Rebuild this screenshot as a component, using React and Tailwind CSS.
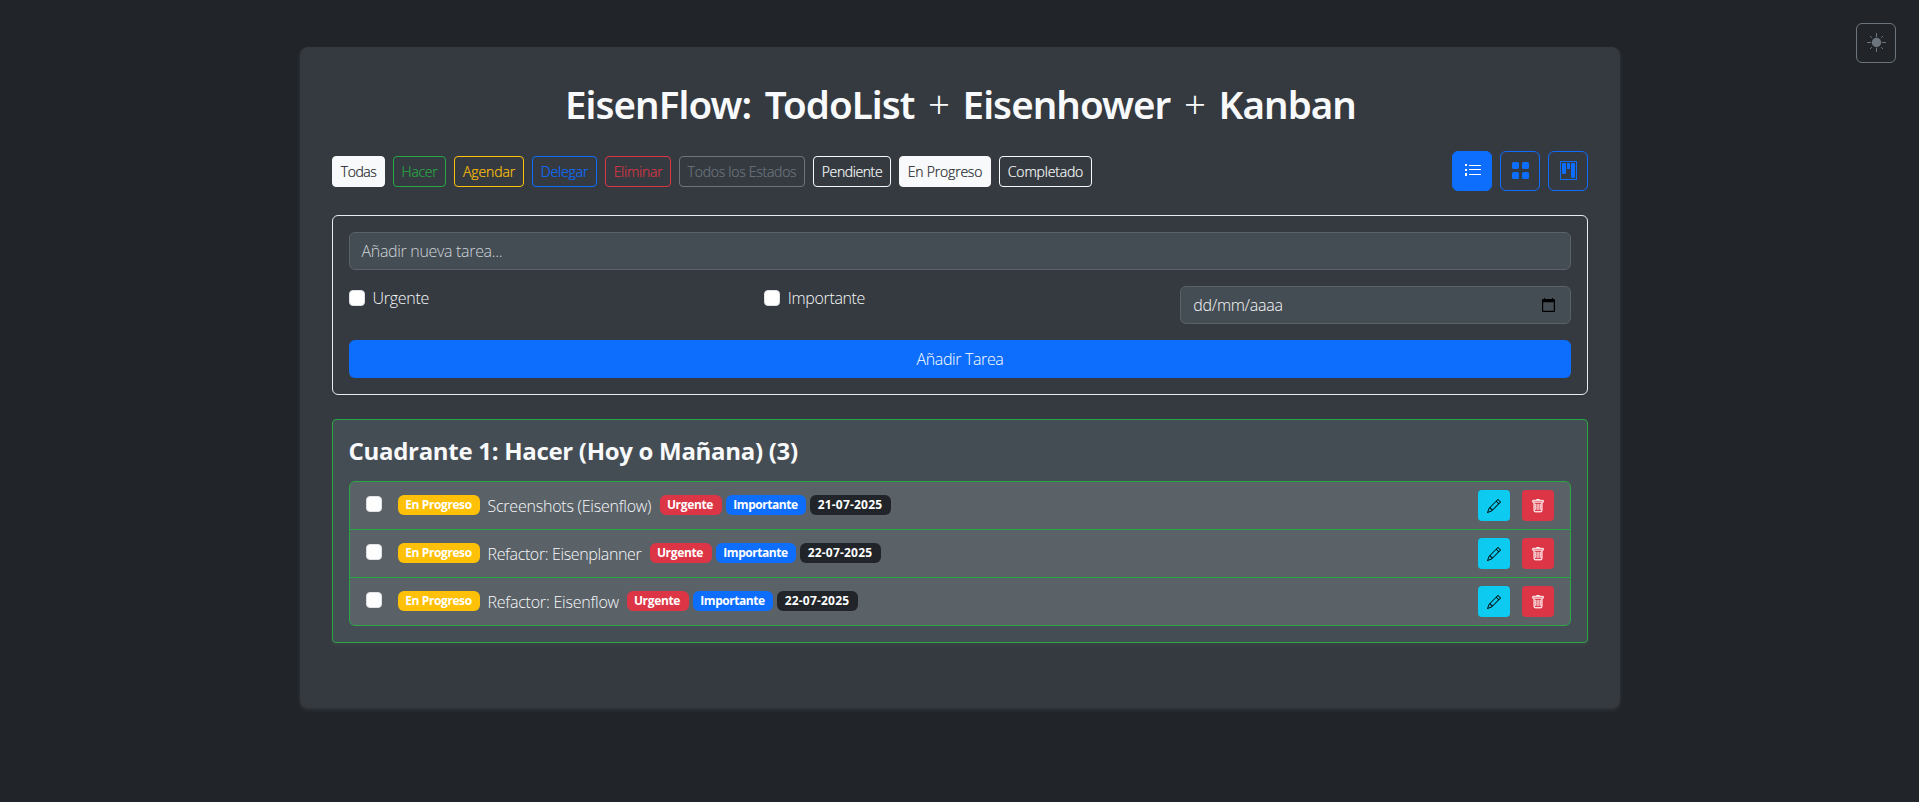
import { BsPencil, BsTrash } from "react-icons/bs";

const FILTERS = [
  { label: "Todas", cls: "w-[53px] tracking-[-0.5px] border-[#f8f9fa] bg-[#f8f9fa] text-[#212529]" },
  { label: "Hacer", cls: "w-[53px] tracking-[-0.3px] border-[#28a745] text-[#28a745]" },
  { label: "Agendar", cls: "w-[70px] tracking-[-0.1px] border-[#ffc107] text-[#ffc107]" },
  { label: "Delegar", cls: "w-[65px] tracking-[-0.15px] border-[#0d6efd] text-[#0d6efd]" },
  { label: "Eliminar", cls: "w-[66px] tracking-[-0.25px] border-[#dc3545] text-[#dc3545]" },
  { label: "Todos los Estados", cls: "w-[126px] tracking-[-0.26px] border-[#6c757d] text-[#6c757d]" },
  { label: "Pendiente", cls: "w-[78px] tracking-[-0.4px] border-[#f8f9fa] text-[#f8f9fa]" },
  { label: "En Progreso", cls: "w-[92px] tracking-[-0.2px] border-[#f8f9fa] bg-[#f8f9fa] text-[#212529]" },
  { label: "Completado", cls: "w-[93px] tracking-[-0.18px] border-[#f8f9fa] text-[#f8f9fa]" },
];

const TASKS = [
  { title: "Screenshots (Eisenflow)", date: "21-07-2025", cls: "w-[164px] tracking-[-0.23px]" },
  { title: "Refactor: Eisenplanner", date: "22-07-2025", cls: "w-[154px] tracking-[-0.36px]" },
  { title: "Refactor: Eisenflow", date: "22-07-2025", cls: "w-[131px] tracking-[-0.22px]" },
];

function SunIcon() {
  return (
    <svg width="19" height="19" viewBox="0 0 19 19" fill="none" stroke="currentColor" strokeWidth="1">
      <circle cx="9.5" cy="9.5" r="4.7" fill="currentColor" stroke="none" />
      <path d="M9.5 0v4M9.5 15v4M0 9.5h4M15 9.5h4M3 3l1.8 1.8M14.2 14.2L16 16M16 3l-1.8 1.8M4.8 14.2L3 16" />
    </svg>
  );
}

function ListIcon() {
  return (
    <svg width="16" height="12" viewBox="0 0 16 12" fill="currentColor" shapeRendering="crispEdges">
      <path d="M0 0h2v2H0zM0 5h2v2H0zM0 9h2v3H0zM4 1h12v1H4zM4 5h12v1H4zM4 10h12v1H4z" />
    </svg>
  );
}

function GridIcon() {
  return (
    <svg width="17" height="17" viewBox="0 0 17 17" fill="currentColor">
      <rect width="7" height="7" rx="1.5" />
      <rect x="10" width="7" height="7" rx="1.5" />
      <rect y="10" width="7" height="7" rx="1.5" />
      <rect x="10" y="10" width="7" height="7" rx="1.5" />
    </svg>
  );
}

function KanbanIcon() {
  return (
    <svg width="17" height="19" viewBox="0 0 17 19" fill="currentColor">
      <rect x="0.5" y="0.5" width="16" height="18" fill="none" stroke="currentColor" />
      <rect x="2" y="2" width="4" height="11" rx="1" />
      <rect x="7" y="2" width="3" height="6" rx="0.5" />
      <rect x="11" y="2" width="4" height="15" rx="1" />
    </svg>
  );
}

function CalendarIcon() {
  return (
    <svg width="13" height="14" viewBox="0 0 13 14" fill="#000">
      <path d="M2 0h1v1h7V0h1v1h1a1 1 0 0 1 1 1v11a1 1 0 0 1-1 1H1a1 1 0 0 1-1-1V2a1 1 0 0 1 1-1h1zM1.2 4.2v8.6h10.6V4.2z" fillRule="evenodd" />
    </svg>
  );
}

function Check() {
  return <span className="block size-4 shrink-0 rounded border border-[#dee2e6] bg-white" />;
}

function Badge({ className, children }) {
  return (
    <span className={`mb-px flex h-5 items-center justify-center rounded-md text-xs font-bold whitespace-nowrap text-white ${className}`}>
      {children}
    </span>
  );
}

export default function App() {
  return (
    <div className="relative h-[802px] overflow-hidden bg-[#212529] pt-[47px] font-['Open_Sans','Noto_Sans',sans-serif] text-base font-light text-[#f8f9fa]">
      <button className="absolute top-[23px] right-[23px] flex size-10 items-center justify-center rounded-md border border-[#6c757d] pb-px pl-px text-[#6c757d]">
        <SunIcon />
      </button>

      <main className="mx-auto h-[661px] w-[1320px] rounded-lg bg-[#343a40] p-8 shadow-[0_2px_4px_rgba(255,255,255,0.08)]">
        <h1 className="mb-[23px] pt-px pl-0.5 text-center font-['Noto_Sans',sans-serif] text-[38.5px] leading-[48px] font-semibold tracking-[-0.95px] [word-spacing:4.5px]">
          EisenFlow: TodoList <span className="font-light">+</span> Eisenhower <span className="font-light">+</span> Kanban
        </h1>

        <div className="mb-6 flex items-center justify-between">
          <div className="flex gap-2">
            {FILTERS.map((f) => (
              <button key={f.label} className={`flex h-[31px] items-center justify-center rounded border pt-px pl-px text-sm whitespace-nowrap [-webkit-text-stroke:0.2px_currentColor] ${f.cls}`}>
                {f.label}
              </button>
            ))}
          </div>
          <div className="flex gap-2">
            <button className="flex size-10 items-center justify-center rounded-md border border-[#0d6efd] bg-[#0d6efd] pb-0.5 pl-0.5 text-white">
              <ListIcon />
            </button>
            <button className="flex size-10 items-center justify-center rounded-md border border-[#0d6efd] pb-px pl-px text-[#0d6efd]">
              <GridIcon />
            </button>
            <button className="flex size-10 items-center justify-center rounded-md border border-[#0d6efd] pb-px pl-px text-[#0d6efd]">
              <KanbanIcon />
            </button>
          </div>
        </div>

        <form className="mb-6 h-[180px] rounded-md border border-[#e9ecef] p-4 shadow-[0_2px_4px_rgba(0,0,0,0.075)]">
          <div className="mb-4 flex h-[38px] items-center rounded-md border border-[#5a6268] bg-[#454d54] px-3 tracking-[-0.32px] text-[#ced4da]">
            Añadir nueva tarea...
          </div>
          <div className="mb-4 grid h-[38px] grid-cols-3 gap-6">
            <label className="flex h-6 items-center gap-2 tracking-[-0.28px]">
              <Check />
              Urgente
            </label>
            <label className="flex h-6 items-center gap-2 tracking-[-0.35px]">
              <Check />
              Importante
            </label>
            <div className="ml-px flex items-center justify-between rounded-md border border-[#5a6268] bg-[#454d54] pr-[15px] pl-3 tracking-[-0.26px]">
              dd/mm/aaaa
              <CalendarIcon />
            </div>
          </div>
          <button type="button" className="flex h-[38px] w-full items-center justify-center rounded-md bg-[#0d6efd] pl-px tracking-[-0.38px] text-white">
            Añadir Tarea
          </button>
        </form>

        <section className="rounded border border-[#28a745] bg-[#454d54] p-4 shadow-[0_2px_4px_rgba(255,255,255,0.05)]">
          <h2 className="mb-4 text-2xl leading-[29px] font-bold tracking-[-0.3px]">Cuadrante 1: Hacer (Hoy o Mañana) (3)</h2>
          <ul className="divide-y divide-[#28a745] rounded-md border border-[#28a745] bg-[#5a6268]">
            {TASKS.map((t) => (
              <li key={t.title} className="flex h-12 items-center px-4 last:h-[47px]">
                <span className="pb-[3px]">
                  <Check />
                </span>
                <Badge className="ml-4 w-[82px] bg-[#ffc107] tracking-[-0.4px]">En Progreso</Badge>
                <span className={`ml-2 whitespace-nowrap ${t.cls}`}>{t.title}</span>
                <Badge className="ml-2 w-[62px] bg-[#dc3545] pr-px tracking-[-0.34px]">Urgente</Badge>
                <Badge className="ml-1 w-[80px] bg-[#0d6efd] tracking-[-0.45px]">Importante</Badge>
                <Badge className="ml-1 w-[81px] bg-[#212529] tracking-[0.2px]">{t.date}</Badge>
                <div className="ml-auto flex gap-3 text-sm">
                  <button className="flex h-[31px] w-8 items-center justify-center rounded bg-[#0dcaf0] text-black">
                    <BsPencil />
                  </button>
                  <button className="flex h-[31px] w-8 items-center justify-center rounded bg-[#dc3545] text-white">
                    <BsTrash stroke="currentColor" strokeWidth="0.3" />
                  </button>
                </div>
              </li>
            ))}
          </ul>
        </section>
      </main>
    </div>
  );
}
